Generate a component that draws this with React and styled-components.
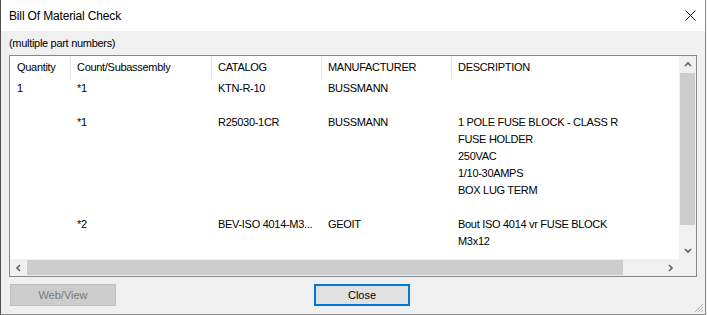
import React from "react";
import styled, { createGlobalStyle } from "styled-components";

const Global = createGlobalStyle`
  html, body { margin: 0; padding: 0; background: #f0f0f0; }
  body { font-family: "Liberation Sans", Arial, sans-serif; }
  * { box-sizing: border-box; }
`;

const Window = styled.div`
  position: relative;
  width: 706px;
  height: 315px;
  display: flex;
  flex-direction: column;
  background: #f0f0f0;
  border-left: 1px solid #4f4f4f;
  border-right: 1px solid #8c8c8c;
  border-bottom: 1px solid #8c8c8c;
  overflow: hidden;
`;

const TitleBar = styled.div`
  height: 31px;
  flex: none;
  background: #ffffff;
  display: flex;
  align-items: center;
  padding-left: 8px;
  padding-right: 9px;
  font-size: 12px;
  letter-spacing: -0.15px;
  color: #000;
`;

const Title = styled.div`
  flex: 1;
`;

const Body = styled.div`
  flex: 1;
  display: flex;
  flex-direction: column;
  padding: 0 8px 0 8px;
  font-size: 11px;
  letter-spacing: -0.3px;
  color: #000;
`;

const Subtitle = styled.div`
  height: 24px;
  display: flex;
  align-items: center;
  padding-bottom: 1px;
`;

const ListBox = styled.div`
  height: 222px;
  border: 1px solid #828790;
  background: #ffffff;
  display: grid;
  grid-template-columns: 1fr 17px;
  grid-template-rows: 1fr 17px;
`;

const Content = styled.div`
  overflow: hidden;
`;

const cols = "61px 141px 110px 130px 1fr";

const HeaderRow = styled.div`
  display: grid;
  grid-template-columns: ${cols};
  height: 24px;
`;

const HeaderCell = styled.div`
  display: flex;
  align-items: center;
  padding-left: ${(p) => (p.$first ? 7 : 6)}px;
  border-right: ${(p) => (p.$last ? "none" : "1px solid #e5e5e5")};
  padding-bottom: 2px;
`;

const Row = styled.div`
  display: grid;
  grid-template-columns: ${cols};
  padding-bottom: 17px;
  line-height: 17px;
`;

const Cell = styled.div`
  padding-left: ${(p) => (p.$first ? 7 : 6)}px;
  white-space: nowrap;
`;

const VScroll = styled.div`
  background: #f0f0f0;
  display: grid;
  grid-template-rows: 17px 1fr 17px;
`;

const HScroll = styled.div`
  background: #f0f0f0;
  display: grid;
  grid-template-columns: 17px 1fr 17px;
`;

const ArrowBox = styled.div`
  display: flex;
  align-items: center;
  justify-content: center;
`;

const Track = styled.div`
  display: flex;
  flex-direction: ${(p) => (p.$vertical ? "column" : "row")};
  padding: ${(p) => (p.$vertical ? "0 1px" : "1px 0")};
`;

const Thumb = styled.div`
  background: #cdcdcd;
  flex: none;
`;

const Corner = styled.div`
  background: #f0f0f0;
`;

const ButtonRow = styled.div`
  display: flex;
  gap: 198px;
  padding-top: 7px;
  padding-left: 1px;
`;

const Button = styled.div`
  height: 22px;
  width: ${(p) => p.$w}px;
  display: flex;
  align-items: center;
  justify-content: center;
  font-size: 11px;
  letter-spacing: 0;
  background: ${(p) => (p.$disabled ? "#cccccc" : "#e1e1e1")};
  color: ${(p) => (p.$disabled ? "#7a7a7a" : "#000")};
  border: ${(p) =>
    p.$default ? "2px solid #0078d7" : p.$disabled ? "1px solid #bfbfbf" : "1px solid #adadad"};
`;

const Grip = styled.svg`
  position: absolute;
  right: 1px;
  bottom: 1px;
`;

const Chevron = ({ dir }) => {
  const paths = {
    up: "M1 5 L4 2 L7 5",
    down: "M1 2 L4 5 L7 2",
    left: "M5 1 L2 4 L5 7",
    right: "M2 1 L5 4 L2 7",
  };
  return (
    <svg width="8" height="8" viewBox="0 0 8 8">
      <path d={paths[dir]} fill="none" stroke="#606060" strokeWidth="1.6" />
    </svg>
  );
};

const rows = [
  { q: "1", c: "*1", cat: "KTN-R-10", m: "BUSSMANN", d: [""] },
  {
    q: "",
    c: "*1",
    cat: "R25030-1CR",
    m: "BUSSMANN",
    d: ["1 POLE FUSE BLOCK - CLASS R", "FUSE HOLDER", "250VAC", "1/10-30AMPS", "BOX LUG TERM"],
  },
  {
    q: "",
    c: "*2",
    cat: "BEV-ISO 4014-M3...",
    m: "GEOIT",
    d: ["Bout ISO 4014 vr FUSE BLOCK", "M3x12"],
  },
];

export default function App() {
  return (
    <Window>
      <Global />
      <TitleBar>
        <Title>Bill Of Material Check</Title>
        <svg width="11" height="11" viewBox="0 0 11 11">
          <path d="M0.5 0.5 L10.5 10.5 M10.5 0.5 L0.5 10.5" stroke="#111" strokeWidth="1" />
        </svg>
      </TitleBar>
      <Body>
        <Subtitle>(multiple part numbers)</Subtitle>
        <ListBox>
          <Content>
            <HeaderRow>
              <HeaderCell $first>Quantity</HeaderCell>
              <HeaderCell>Count/Subassembly</HeaderCell>
              <HeaderCell>CATALOG</HeaderCell>
              <HeaderCell>MANUFACTURER</HeaderCell>
              <HeaderCell $last>DESCRIPTION</HeaderCell>
            </HeaderRow>
            {rows.map((r, i) => (
              <Row key={i}>
                <Cell $first>{r.q}</Cell>
                <Cell>{r.c}</Cell>
                <Cell>{r.cat}</Cell>
                <Cell>{r.m}</Cell>
                <Cell>
                  {r.d.map((l, j) => (
                    <div key={j}>{l || "\u00a0"}</div>
                  ))}
                </Cell>
              </Row>
            ))}
          </Content>
          <VScroll>
            <ArrowBox>
              <Chevron dir="up" />
            </ArrowBox>
            <Track $vertical>
              <Thumb style={{ height: 152 }} />
            </Track>
            <ArrowBox>
              <Chevron dir="down" />
            </ArrowBox>
          </VScroll>
          <HScroll>
            <ArrowBox>
              <Chevron dir="left" />
            </ArrowBox>
            <Track>
              <Thumb style={{ width: 596 }} />
            </Track>
            <ArrowBox>
              <Chevron dir="right" />
            </ArrowBox>
          </HScroll>
          <Corner />
        </ListBox>
        <ButtonRow>
          <Button $w={106} $disabled>Web/View</Button>
          <Button $w={96} $default>Close</Button>
        </ButtonRow>
      </Body>
      <Grip width="11" height="11" viewBox="0 0 11 11">
        <path d="M10 2 L2 10 M10 5 L5 10 M10 8 L8 10" stroke="#b4b4b4" strokeWidth="1" />
      </Grip>
    </Window>
  );
}
